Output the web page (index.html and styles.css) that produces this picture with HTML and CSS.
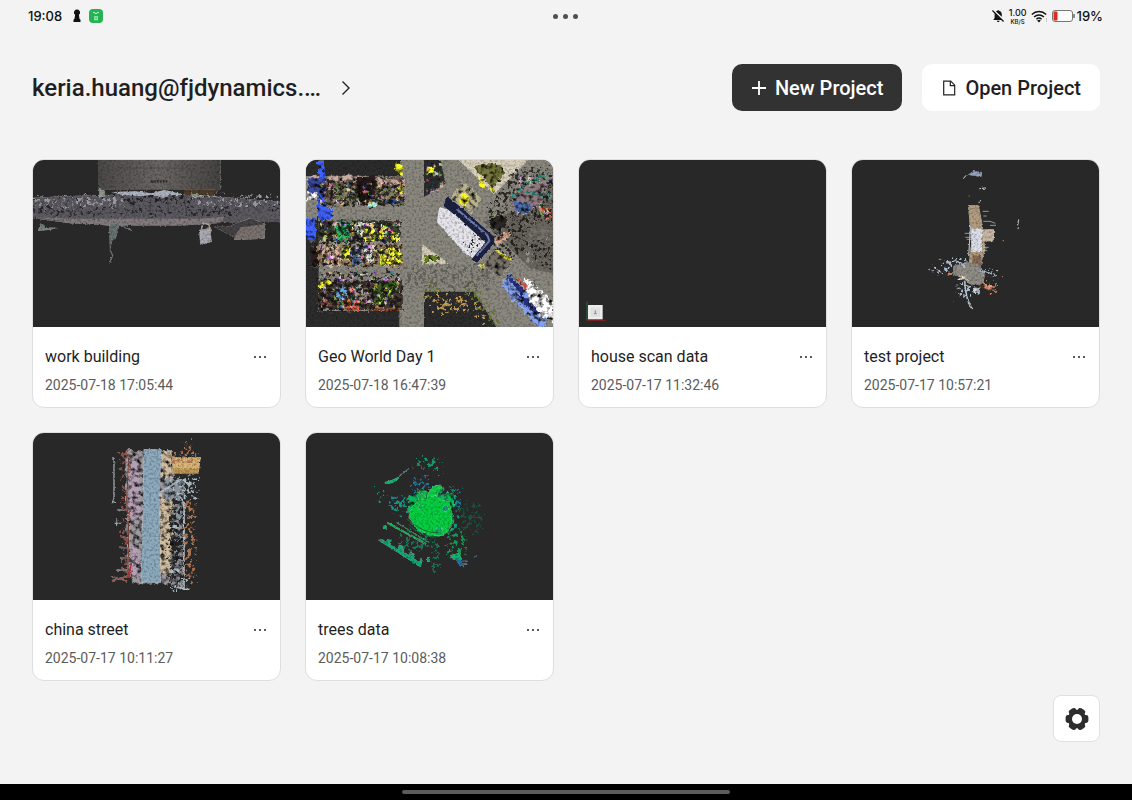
FILE: index.html
```html
<!DOCTYPE html>
<html lang="en">
<head>
<meta charset="utf-8">
<meta name="viewport" content="width=device-width, initial-scale=1">
<title>Projects</title>
<link rel="stylesheet" href="styles.css">
</head>
<body>
<svg class="defs" width="0" height="0" aria-hidden="true">
  <defs>
    <!-- rough edges and luminance grain for scanned surfaces -->
    <filter id="grain" x="-10%" y="-10%" width="120%" height="120%" color-interpolation-filters="sRGB">
      <feTurbulence type="fractalNoise" baseFrequency="0.07" numOctaves="3" seed="4" result="n"/>
      <feDisplacementMap in="SourceGraphic" in2="n" scale="22" xChannelSelector="R" yChannelSelector="G" result="d"/>
      <feColorMatrix in="n" values="0 0 2.4 0 -.35  0 0 2.4 0 -.35  0 0 2.4 0 -.35  0 0 0 0 1" result="g"/>
      <feBlend in="d" in2="g" mode="multiply" result="b"/>
      <feComposite in="b" in2="d" operator="in"/>
    </filter>
    <!-- breaks a shape up into loose points -->
    <filter id="scatter" x="-20%" y="-20%" width="140%" height="140%" color-interpolation-filters="sRGB">
      <feTurbulence type="fractalNoise" baseFrequency="0.09" numOctaves="3" seed="11" result="n"/>
      <feDisplacementMap in="SourceGraphic" in2="n" scale="50" xChannelSelector="R" yChannelSelector="G" result="d"/>
      <feColorMatrix in="n" values="0 0 0 0 1  0 0 0 0 1  0 0 0 0 1  0 0 9 0 -4.6" result="m"/>
      <feComposite in="d" in2="m" operator="in"/>
    </filter>
    <!-- light speckle -->
    <filter id="fine" x="-10%" y="-10%" width="120%" height="120%" color-interpolation-filters="sRGB">
      <feTurbulence type="fractalNoise" baseFrequency="0.14" numOctaves="2" seed="7" result="n"/>
      <feDisplacementMap in="SourceGraphic" in2="n" scale="8" xChannelSelector="R" yChannelSelector="G" result="d"/>
      <feColorMatrix in="n" values="0 0 .7 0 .6  0 0 .7 0 .6  0 0 .7 0 .6  0 0 0 0 1" result="g"/>
      <feBlend in="d" in2="g" mode="multiply" result="b"/>
      <feComposite in="b" in2="d" operator="in"/>
    </filter>
    <!-- multicoloured points laid over dense scans -->
    <filter id="confetti" x="0" y="0" width="100%" height="100%" color-interpolation-filters="sRGB">
      <feTurbulence type="fractalNoise" baseFrequency="0.06" numOctaves="3" seed="23" result="n"/>
      <feColorMatrix in="n" values="3.2 0 0 0 -1.1  1.8 1.4 0 0 -1.1  1.4 0 1.8 0 -1.15  0 0 0 8 -4" result="c"/>
      <feComposite in="c" in2="SourceGraphic" operator="in"/>
    </filter>
    <linearGradient id="wall" x1="0" x2="1" y1="0" y2="0"><stop offset="0" stop-color="#4b4948"/><stop offset=".5" stop-color="#6a6664"/><stop offset="1" stop-color="#454341"/></linearGradient>
  </defs>
</svg>

<div class="app">
  <div class="status">
    <div class="status-side">
      <span class="clock">19:08</span>
      <svg class="ic-pawn" width="8" height="14" viewBox="0 0 8 14" aria-hidden="true"><path d="M4 .5a3 3 0 0 1 2.700 4.400L5.900 5.800 6.500 9.800l1 1V13h-7v-2.200l1-1 .6-4L1.300 4.900A3 3 0 0 1 4 .5z" fill="#111"/></svg>
      <svg width="14" height="14" viewBox="0 0 14 14" aria-hidden="true"><rect width="14" height="14" rx="4" fill="#23b353"/><path d="M4 3.200q3 2.600 6 0" fill="none" stroke="#d5f6df" stroke-width="1"/><path d="M5 8h4M5 10.300h4M6 7v4.500M8.200 7v4.500" stroke="#c5f2d2" stroke-width=".8" fill="none"/></svg>
    </div>
    <div class="dots" aria-hidden="true"><i></i><i></i><i></i></div>
    <div class="status-side status-right">
      <svg width="14" height="14" viewBox="0 0 14 14" aria-hidden="true"><path d="M3.600 4.200 10.800 11H2.200l1.400-2zM5 2.600C6 1.800 6.300 2 6.800 1.300h.8C8 2 10.600 2 10.800 5.200v2.600zM5.800 11.700h2.800a1.400 1.200 0 0 1-2.800 0z" fill="#111"/><path d="M1.400 1.500 12.600 12.500" stroke="#111" stroke-width="1.200"/></svg>
      <span class="rate"><b>1.00</b><small>KB/S</small></span>
      <svg width="17" height="13" viewBox="0 0 17 13" aria-hidden="true"><g fill="none" stroke="#111" stroke-width="1.400"><path d="M.8 4.400a10.500 10.500 0 0 1 14.400 0M3.100 6.900a7.200 7.200 0 0 1 9.800 0M5.400 9.200a4 4 0 0 1 5.200 0"/></g><path d="M8 12.600 6.200 10.600a2.600 2.600 0 0 1 3.600 0z" fill="#111"/><path d="M15.500 8v4" stroke="#ccc"/></svg>
      <svg class="ic-battery" width="23" height="12" viewBox="0 0 23 12" aria-hidden="true"><rect x=".5" y=".5" width="20" height="11" rx="2.500" fill="#fafafa" stroke="#777"/><rect x="1.500" y="1.500" width="4" height="9" rx="1" fill="#d92c20"/><path d="M22 4v4" stroke="#555" stroke-width="1.300"/></svg>
      <span class="percent">19%</span>
    </div>
  </div>

  <header class="header">
    <button class="account" type="button">
      <span>keria.huang@fjdynamics.…</span>
      <svg width="10" height="16" viewBox="0 0 10 16" aria-hidden="true"><path d="M1.500 1.500 8 8l-6.500 6.500" fill="none" stroke="#222" stroke-width="1.400"/></svg>
    </button>
    <div class="actions">
      <button class="btn btn-dark" type="button">
        <svg width="16" height="16" viewBox="0 0 16 16" aria-hidden="true"><path d="M8 1v14M1 8h14" stroke="#fff" stroke-width="1.800"/></svg>
        New Project
      </button>
      <button class="btn btn-light" type="button">
        <svg width="16" height="16" viewBox="0 0 16 16" aria-hidden="true"><path d="M2.700 1.200h7l4 4v9.600h-11zM9.300 1.400v4.200h4.200" fill="none" stroke="#222" stroke-width="1.200"/></svg>
        Open Project
      </button>
    </div>
  </header>

  <main class="grid">
    <article class="card">
      <svg class="thumb" viewBox="27 30 741 501" preserveAspectRatio="xMidYMid slice" role="img" aria-label="work building preview">
        <g filter="url(#fine)">
          <path d="M222 20H590v98H222z" fill="url(#wall)"/>
          <path d="M480 118h105l-15 20h-90z" fill="#4c3d2a"/>
          <path d="M270 54H508" stroke="#444" stroke-width="2"/>
          <path d="M380 94h50" stroke="#2d2d2d" stroke-width="7" stroke-dasharray="6 3"/>
        </g>
        <g filter="url(#fine)">
          <path d="M20 144C180 134 400 130 560 138L775 156v58H700L600 218 480 226H250L140 220 20 204z" fill="#5c5a60"/>
          <path d="M40 202L140 206H520L600 200 590 216 480 226H250L140 220z" fill="#827a7d"/>
        </g>
        <g filter="url(#scatter)">
          <path d="M20 140C180 130 400 126 560 134L775 156v26L560 158 20 164z" fill="#1f1f24"/>
          <path d="M20 172Q400 188 640 172v22H20z" fill="#26262b"/>
          <path d="M30 140H300v30H30zM500 140H760v26H500z" fill="#98969f"/>
        </g>
        <g stroke="#343439" stroke-width="2"><path d="M60 150 40 190M95 148 70 190M135 146 112 190M175 146 152 190M330 145v44M380 144v44M430 144l4 44M480 145l8 44M530 146l16 44M570 150l26 42M620 156l34 34M670 160l46 28"/></g>
        <g filter="url(#fine)"><path d="M630 238l10-16 82-2v46l-92 4z" fill="#7b7270"/><path d="M570 230h40l70-26 40 18-70 10-20 30z" fill="#454145"/><path d="M525 240l34-6 4 42-34 8z" fill="#aaa8b2"/></g>
        <g filter="url(#fine)"><path d="M532 238l5-18 17 2 8 22" stroke="#b69e96" stroke-width="4" fill="none"/><path d="M262 126l70-2 50 6 40-10 60 14-50 2-14 8-30-10-40 4-54-4z" fill="#aeb5c1"/><path d="M226 118l16 4v18h-16zM500 130l32 6-20 8z" fill="#8f9a8c"/><path d="M42 242l8-22 14 12 38 2-30 6z" fill="#77847f"/><path d="M256 222h30l-8 36-14 14-6 28z" fill="#667170"/><path d="M288 226l38 16M258 300l8 16-10 24" stroke="#667270" stroke-width="3" fill="none"/></g>
      </svg>
      <div class="info">
        <h2>work building</h2>
        <button class="more" type="button" aria-label="More options for work building"><i></i><i></i><i></i></button>
        <time datetime="2025-07-18T17:05:44">2025-07-18 17:05:44</time>
      </div>
    </article>

    <article class="card">
      <svg class="thumb" viewBox="18 15 741 501" preserveAspectRatio="xMidYMid slice" role="img" aria-label="Geo World Day 1 preview">
        <g filter="url(#fine)">
          <path d="M10 0H770V530H10z" fill="#8b887f"/>
          <path d="M10 0H300V64H10zM10 194H56V540H10zM10 468H298V530H10zM372 410H520L600 530H372zM372 10l50 6 14 70-64 40z" fill="#2c2c2c"/>
          <path d="M470 10H690L582 118z" fill="#d8cfbd"/>
          <path d="M366 266l80 60h-80z" fill="#d5ceb9"/>
          <path d="M620 176L770 60V360L690 340 550 200z" fill="#6a665f"/>
        </g>
        <g filter="url(#grain)">
          <path d="M54 66H314V152H54z" fill="#6d5c50"/><path d="M54 196H300V262H54z" fill="#3c4238"/><path d="M54 268H306V334H54z" fill="#937b60"/><path d="M54 376H306V466H54z" fill="#453a33"/>
          <path d="M18 62H180l50 8 84 6v14L180 84 20 76z" fill="#c9ab9f"/>
          <path d="M54 20h18v130l26 12v30H54zM18 190h30v66H18z" fill="#3e62ff"/><path d="M22 70h54v50H22z" fill="#3d4ba0"/>
          <path d="M170 66h56v80h-56zM30 274h24v60H30z" fill="#2b1d1d"/>
          <path d="M18 108l28 4 4 22-28 2z" fill="#fff"/>
        </g>
        <g filter="url(#grain)">
          <path d="M104 200h42v56h-42z" fill="#27c36c"/><path d="M150 204h72v56l-30-4z" fill="#e4e7cd"/><path d="M150 208l36 50h-36z" fill="#252724"/>
          <path d="M190 214l30 4v40h-26zM240 206l26 12-12 32-20 4zM276 230l24 6v22h-28zM236 286l66-10 4 50-66 4zM130 270l18 8v44l-18-12zM288 22l22 10-6 28-20-12zM62 376l34 4-10 18-26 4zM286 92l26 6v22l-20-8zM380 38h24v18h-24z" fill="#faff2c"/>
          <path d="M60 274h58v58H76z" fill="#e1b39b"/><path d="M150 272l34 6v52h-34z" fill="#536d9d"/><path d="M190 280l28-6v50l-24-10z" fill="#ebecf0"/>
          <path d="M132 430l50 6-4 30-44 4zM718 158l38 2-10 32-22-10z" fill="#ff653d"/><path d="M108 404l24-16 12 40-24 14z" fill="#6ba9e0"/><path d="M150 390l50 10 4 34-44-8z" fill="#aa9f98"/><path d="M232 384l70-6-44 70-38 4z" fill="#3c6124"/><path d="M234 450l64-70" stroke="#c0e93a" stroke-width="7"/>
          <path d="M100 96h62v52h-62zM234 96h60v50h-60z" fill="#7e8061"/><path d="M206 136h24v18h-24z" fill="#aef3de"/><path d="M62 446h124M206 464h98" stroke="#7d3b25" stroke-width="8"/>
        </g>
        <g filter="url(#confetti)" opacity=".75"><path d="M60 84H310V150H60zM60 200H300V260H60zM60 270H300V330H60zM60 350H300V460H60zM660 60H756V180H640zM380 24h50v90h-50z"/></g>
        <g filter="url(#scatter)"><path d="M60 80H310V150H60zM60 200H300V260H60zM60 270H300V330H60zM60 350H300V460H60zM640 40H756V240L600 330 560 160z" fill="#15130f" opacity=".8"/><path d="M680 200h76v120h-76z" fill="#c5c2b9" opacity=".5"/></g>
        <g filter="url(#grain)">
          <path d="M490 78l54 50-28 46-66-42z" fill="#b7b18c"/><path d="M486 110l20 14-8 36-18-18zM536 62l24 26-8 12-18-16zM566 96l20 4-8 18z" fill="#fff81f"/>
          <path d="M520 36l70-16 26 34-40 46z" fill="#75773a"/>
          <path d="M582 178l44 26" stroke="#97b53c" stroke-width="6"/><path d="M560 200l40-22 28 22-30 36z" fill="#2b2925"/><path d="M580 262l40-34 14 10-36 32z" fill="#dca98f"/>
          <path d="M638 126l48-36 50-10-6 60-64 40-34-18z" fill="#907c80"/><path d="M634 130l40-40 74-40M680 110l76 14" stroke="#288575" stroke-width="6" fill="none"/><path d="M640 136l60 14-20 30-30-12z" fill="#4d6eab"/>
          <path d="M548 330l34-44 56 34-36 48z" fill="#78716a"/><path d="M536 326l20 16M590 288l40 26" stroke="#eee832" stroke-width="8"/>
        </g>
        <g filter="url(#fine)">
          <path d="M418 156L410 200 500 300 522 310 568 258 478 172z" fill="#e6e6ec"/>
          <path d="M440 122l38 30 104 92v22l-50 58-20-8 44-54-90-82-36-26z" fill="#1d2140"/><path d="M470 162l92 78 6 18-38 44" stroke="#7080b4" stroke-width="6" fill="none"/>
        </g>
        <g filter="url(#grain)">
          <path d="M624 354L740 470V520H716L602 390z" fill="#84a0f0"/><path d="M668 360L762 440v66L700 470z" fill="#fff"/><path d="M630 368l40 46M658 420l56 56" stroke="#263180" stroke-width="13"/><path d="M650 370l32 36" stroke="#d15242" stroke-width="7"/>
          <path d="M372 302h42v16h-42z" fill="#657e24"/>
        </g>
        <g filter="url(#scatter)"><path d="M372 420h36v60M430 420v40h14v-34M462 422v40h12v-40M494 420v46M520 440l40 60" stroke="#c39a51" stroke-width="18" fill="none"/><path d="M368 384l40-6 12 34-46 10zM490 390l40-6 70 126-26 4z" fill="#63752e"/><path d="M694 250l60 20v70l-56-30zM520 240l30 10-30 34-30-4z" fill="#222"/><path d="M320 330h260v70H320z" fill="#4b4944" opacity=".6"/></g>
      </svg>
      <div class="info">
        <h2>Geo World Day 1</h2>
        <button class="more" type="button" aria-label="More options for Geo World Day 1"><i></i><i></i><i></i></button>
        <time datetime="2025-07-18T16:47:39">2025-07-18 16:47:39</time>
      </div>
    </article>

    <article class="card">
      <svg class="thumb" viewBox="22 15 741 501" preserveAspectRatio="xMidYMid slice" role="img" aria-label="house scan data preview">
        <path d="M46 440v56" stroke="#276c3c" stroke-width="3"/><path d="M46 496h56" stroke="#8a2020" stroke-width="3"/><rect x="49" y="450" width="44" height="43" fill="#ececec"/><rect x="57" y="458" width="28" height="27" fill="#dfdfdf"/><path d="M71 466v10M67 476h8" stroke="#888" stroke-width="3"/>
      </svg>
      <div class="info">
        <h2>house scan data</h2>
        <button class="more" type="button" aria-label="More options for house scan data"><i></i><i></i><i></i></button>
        <time datetime="2025-07-17T11:32:46">2025-07-17 11:32:46</time>
      </div>
    </article>

    <article class="card">
      <svg class="thumb" viewBox="-144 0 741 501" preserveAspectRatio="xMidYMid slice" role="img" aria-label="test project preview">
        <g filter="url(#fine)">
          <path d="M204 136h32l12 60 8 70-14 50h-36l8-70z" fill="#b39d81"/><path d="M214 206h32v70h-32z" fill="#dde0ea"/><path d="M246 208h36v36h-34z" fill="#c9b7a4"/><path d="M218 286h26v30h-28z" fill="#826a57"/>
          <path d="M160 318l40-12 40 8 14 32-4 26-38 4-22-22-30-10z" fill="#8f8d85"/>
          <path d="M204 44l16-10 26 2-2 14-20-2z" fill="#95a2c0"/>
        </g>
        <g filter="url(#grain)">
          <path d="M232 368l56 12-20 10-34-12z" fill="#e19e7c"/><path d="M222 380h14v24l-12-4z" fill="#ccd4dc"/><path d="M176 350h24v10h-24z" fill="#f1e3d4"/><path d="M132 334l34 8" stroke="#d67e60" stroke-width="9"/>
        </g>
        <g fill="none" stroke="#c5cfda" stroke-width="3">
          <g filter="url(#fine)"><path d="M194 362q2 54 22 84" stroke-width="5"/><path d="M140 310l26-8 20 8M356 178l-3 18M355 204l-2 4M212 190l-6 100M246 332l30 10M282 346l6 2M190 56l8-10M238 86l20-2M236 130l6-10"/></g>
          <path d="M248 154h18M250 168h10M250 184h20l16 6M270 196h18M194 220h22M196 232h20M200 238h18M248 262h18M248 272h14M170 386h12" stroke-width="2"/>
          <path d="M308 242h4M206 108h3M116 298h8M94 332h8M306 350h3" stroke="#b18c78"/>
        </g>
        <g filter="url(#scatter)"><path d="M134 300h70v20h-70zM90 320h70v20h-70zM170 370h40v40h-40zM240 330h50v16h-50z" fill="#a9b9cd"/><path d="M260 366h34v30h-34z" fill="#cd744b"/></g>
      </svg>
      <div class="info">
        <h2>test project</h2>
        <button class="more" type="button" aria-label="More options for test project"><i></i><i></i><i></i></button>
        <time datetime="2025-07-17T10:57:21">2025-07-17 10:57:21</time>
      </div>
    </article>

    <article class="card">
      <svg class="thumb" viewBox="-141 9 741 501" preserveAspectRatio="xMidYMid slice" role="img" aria-label="china street preview">
        <g filter="url(#grain)">
          <path d="M136 60h142v120l-6 280H158l-12-30z" fill="#9c979d"/>
          <path d="M146 90h34v170h-34zM152 350h26v80h-26z" fill="#b59fb4"/>
          <path d="M244 64h30v80h-30zM240 190h40v80l-8 160h-34z" fill="#d0bda0"/>
          <path d="M244 150h70v60h-60zM282 220h34v130h-34z" fill="#8a929b"/><path d="M276 360h34v112h-34z" fill="#888a90"/>
          <path d="M270 280h26v24h-26zM270 330h40v16h-40zM280 380h30v10h-30z" fill="#242428"/>
        </g>
        <g filter="url(#fine)">
          <path d="M192 58h52l-6 140 4 260h-58l4-200z" fill="#8dabbd"/>
          <path d="M276 82h86l-6 48h-78z" fill="#dcb878"/><path d="M278 114h78v16h-78z" fill="#c09858"/>
          <path d="M236 190l62-38" stroke="#a8bac8" stroke-width="4"/><path d="M262 424l36-8-4 18zM268 290l26-10v18z" fill="#b7c3cc"/>
          <path d="M312 216v260l-18-4M308 478h20" stroke="#bfc6d2" stroke-width="4" fill="none"/>
          <path d="M96 84h6v120l-6 16M96 214l12 4M110 268v18M112 240h30M104 280h20M110 420h34" stroke="#9ea7aa" stroke-width="3" fill="none"/>
          <path d="M146 80l-6 130 6 80-2 140" stroke="#6e403c" stroke-width="4" fill="none"/><path d="M120 318l26 8M118 352l34 2M120 384l32-2M96 452l50-14M96 440l46 14" stroke="#9a5248" stroke-width="4" fill="none"/>
          <path d="M152 240l-8 14M154 400l-8 42" stroke="#ad323c" stroke-width="6"/>
        </g>
        <g filter="url(#scatter)"><path d="M114 66h34v60h-34zM126 130h20v310h-20z" fill="#8b4f47"/><path d="M270 70h80v30h-80zM314 36h26v40h-26zM316 130h30v330h-30z" fill="#aa7350"/><path d="M280 140h70v70h-70zM280 440h50v40h-50z" fill="#a9bac3"/><path d="M266 230h50v230h-50z" fill="#242426"/></g>
      </svg>
      <div class="info">
        <h2>china street</h2>
        <button class="more" type="button" aria-label="More options for china street"><i></i><i></i><i></i></button>
        <time datetime="2025-07-17T10:11:27">2025-07-17 10:11:27</time>
      </div>
    </article>

    <article class="card">
      <svg class="thumb" viewBox="-132 9 741 501" preserveAspectRatio="xMidYMid slice" role="img" aria-label="trees data preview">
        <g filter="url(#scatter)">
          <path d="M190 140h50v60h-50zM120 196h70v54h-70zM270 170h60v60h-60z" fill="#1e789e"/>
          <path d="M130 210h70v40h-70zM260 180h60v130h-60zM190 180h60v60h-60z" fill="#159878"/>
          <path d="M150 310h90v50h-90zM244 330h26v90h-26z" fill="#15875f" opacity=".8"/><path d="M296 300h50v90h-50z" fill="#159855"/>
          <path d="M330 220h60v90h-60z" fill="#145f42" opacity=".8"/><path d="M196 86h76v24h-76zM254 120h20v12h-20zM84 180h16v40h-16z" fill="#18996d"/>
        </g>
        <g filter="url(#grain)"><path d="M176 200l40-20 40 10 50 0 6 40-2 40-14 30-26 20-60-10-34-40z" fill="#0bb55a"/></g>
        <path filter="url(#fine)" d="M204 214q20-26 48-22l20 18 26 4 8 38-2 38-26 28-36-2-40-18-26-36 8-30z" fill="#05ce41"/>
        <g filter="url(#fine)">
          <path d="M232 202q4-36 40-38l6 12q-16 24-44 26z" fill="#10d04c"/><path d="M204 210q4-22 26-28l-4 26z" fill="#16bb4b"/>
          <path d="M104 156q26-4 44-18l-2 8q-16 16-40 16z" fill="#0dbc73"/><path d="M148 138l28-22" stroke="#178e68" stroke-width="3"/>
          <path d="M112 278l116 64" stroke="#07b94f" stroke-width="5"/><path d="M140 278l98 60" stroke="#0f8649" stroke-width="3"/>
          <path d="M84 330l14-2 12 10v-10l14 2-2 14 22 14 2-12 12 2v16l20 12 2-10 14 6-2 14 18 10 2-12 6 4-6 24z" fill="#0faa77"/>
          <path d="M98 288l12-4v12h-10zM232 384l8-2v14h-8zM300 376l24-6 12 16-24 4z" fill="#0db867"/>
          <path d="M318 384l14 8 8 18-12-4zM336 394h16M340 402h12M370 382l10-4" stroke="#1b69b6" stroke-width="3" fill="#1577ad"/>
          <circle cx="286" cy="236" r="9" fill="#139a73"/><circle cx="268" cy="300" r="10" fill="#10ad62"/><circle cx="212" cy="232" r="7" fill="#11a760"/>
        </g>
        <path d="M172 268q50 44 94 40M176 284q50 44 90 36M232 184l-4 24M274 176l-8 14" stroke="#17683a" stroke-width="3" fill="none"/>
      </svg>
      <div class="info">
        <h2>trees data</h2>
        <button class="more" type="button" aria-label="More options for trees data"><i></i><i></i><i></i></button>
        <time datetime="2025-07-17T10:08:38">2025-07-17 10:08:38</time>
      </div>
    </article>
  </main>

  <button class="settings" type="button" aria-label="Settings">
    <svg width="24" height="24" viewBox="-12 -12 24 24" aria-hidden="true">
      <g fill="#2d2d2d"><circle r="9.200"/><rect id="tooth" x="5" y="-4" width="6.400" height="8" rx="2.400"/><use href="#tooth" transform="rotate(60)"/><use href="#tooth" transform="rotate(120)"/><use href="#tooth" transform="rotate(180)"/><use href="#tooth" transform="rotate(240)"/><use href="#tooth" transform="rotate(300)"/></g>
      <circle r="5" fill="#fff"/>
    </svg>
  </button>

  <div class="navbar" aria-hidden="true"><span></span></div>
</div>
</body>
</html>
```
FILE: styles.css
```css
* { box-sizing: border-box; }

body {
  margin: 0;
  background: #f3f3f3;
  color: #1f1f1f;
  font-family: Roboto, "Noto Sans", sans-serif;
}

button {
  margin: 0;
  padding: 0;
  border: 0;
  background: none;
  color: inherit;
  font: inherit;
  cursor: pointer;
}

svg { display: block; flex: none; }

.defs { position: absolute; }

.app {
  position: relative;
  display: flex;
  flex-direction: column;
  min-height: 100vh;
}

.status {
  display: grid;
  grid-template-columns: 1fr auto 1fr;
  align-items: center;
  height: 32px;
  padding: 0 29px 0 28px;
  font-family: Inter, sans-serif;
  font-size: 13px;
  font-weight: 500;
  color: #111;
}

.status-side { display: flex; align-items: center; gap: 4px; }
.status-right { justify-content: flex-end; }
.clock { margin-right: 7px; }
.ic-pawn { margin-right: 4px; }
.percent { margin-left: -2px; }

.dots { display: flex; gap: 5px; }
.dots i { width: 5px; height: 5px; border-radius: 50%; background: #505050; }

.rate { display: flex; flex-direction: column; align-items: center; }
.rate b { font-size: 9px; font-weight: 500; line-height: 10px; }
.rate small { font-size: 6px; line-height: 7px; }

.header {
  display: flex;
  align-items: center;
  justify-content: space-between;
  gap: 24px;
  padding: 32px 32px 0;
}

.account {
  display: flex;
  align-items: center;
  gap: 20px;
  font-size: 24px;
  font-weight: 500;
  line-height: 32px;
}

.actions { display: flex; gap: 20px; }

.btn {
  display: flex;
  align-items: center;
  gap: 8px;
  height: 47px;
  padding: 0 19px;
  border-radius: 10px;
  font-size: 20px;
  font-weight: 500;
  white-space: nowrap;
}

.btn-dark { background: #323232; color: #fff; }
.btn-light { background: #fff; }

.grid {
  display: grid;
  grid-template-columns: repeat(4, 1fr);
  align-items: start;
  align-content: start;
  gap: 24px;
  flex: 1;
  padding: 48px 32px 32px;
}

.card {
  overflow: hidden;
  border: 1px solid #dedede;
  border-radius: 12px;
  background: #fff;
}

.thumb {
  width: 100%;
  aspect-ratio: 247 / 167;
  background: #282828;
}

.info {
  display: grid;
  grid-template-columns: 1fr auto;
  align-items: center;
  row-gap: 6px;
  padding: 18px 11px 12px 12px;
}

.info h2 { margin: 0; font-size: 16px; font-weight: 400; line-height: 24px; }
.info time { font-size: 14px; line-height: 20px; color: #5c5c5c; }

.more { display: flex; gap: 3px; padding: 8px 3px; }
.more i { width: 2px; height: 2px; border-radius: 50%; background: #222; }

.settings {
  position: absolute;
  right: 32px;
  bottom: 58px;
  display: grid;
  place-items: center;
  width: 47px;
  height: 47px;
  border: 1px solid #e0e0e0;
  border-radius: 8px;
  background: #fff;
}

.navbar {
  display: grid;
  place-items: center;
  height: 16px;
  background: #000;
}

.navbar span { width: 29%; height: 4px; border-radius: 2px; background: #5c5c5c; }
```
